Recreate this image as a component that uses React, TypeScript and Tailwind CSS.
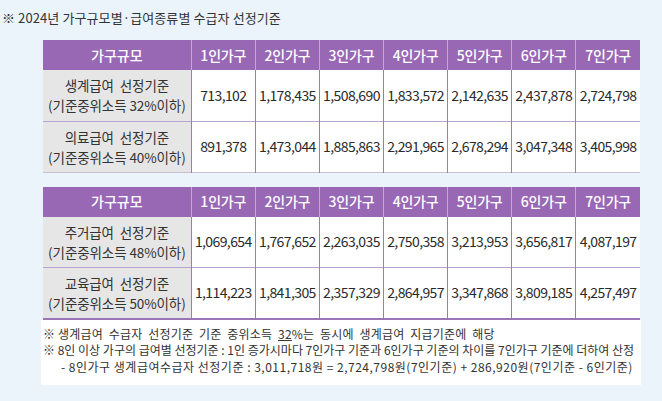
import React from "react";

const cols = ["1인가구", "2인가구", "3인가구", "4인가구", "5인가구", "6인가구", "7인가구"];

type Row = { a: string; b: string; v: string[] };

const t1: Row[] = [
  { a: "생계급여  선정기준", b: "(기준중위소득 32%이하)", v: ["713,102", "1,178,435", "1,508,690", "1,833,572", "2,142,635", "2,437,878", "2,724,798"] },
  { a: "의료급여  선정기준", b: "(기준중위소득 40%이하)", v: ["891,378", "1,473,044", "1,885,863", "2,291,965", "2,678,294", "3,047,348", "3,405,998"] },
];
const t2: Row[] = [
  { a: "주거급여  선정기준", b: "(기준중위소득 48%이하)", v: ["1,069,654", "1,767,652", "2,263,035", "2,750,358", "3,213,953", "3,656,817", "4,087,197"] },
  { a: "교육급여  선정기준", b: "(기준중위소득 50%이하)", v: ["1,114,223", "1,841,305", "2,357,329", "2,864,957", "3,347,868", "3,809,185", "4,257,497"] },
];

function Table({ rows, last }: { rows: Row[]; last?: boolean }) {
  return (
    <table className={`w-[597px] border-collapse table-fixed ${last ? "border-b-2 border-b-[#9a76b8]" : "border-b border-b-[#c9c1d3]"}`}>
      <colgroup>
        <col className="w-[148px]" />
        {cols.map((c) => (
          <col key={c} className="w-[64px]" />
        ))}
      </colgroup>
      <thead>
        <tr className="h-[30px] bg-[#9968b5] text-white text-[14px]">
          <th className="font-medium border-r border-r-[#c3a8d6]">가구규모</th>
          {cols.map((c, i) => (
            <th key={c} className={`font-medium tracking-[-0.2px] ${i < 6 ? "border-r border-r-[#c3a8d6]" : ""}`}>
              {c}
            </th>
          ))}
        </tr>
      </thead>
      <tbody>
        {rows.map((r, ri) => (
          <tr key={ri} className={`h-[51px] ${ri > 0 ? "border-t border-t-[#b9a3cf]" : ""}`}>
            <td className="bg-[#e6e6e6] text-center text-[13.5px] leading-[20px] text-[#333] border-r border-r-[#9b7bbb] whitespace-pre tracking-[-0.1px]">
              <div>{r.a}</div>
              <div>{r.b}</div>
            </td>
            {r.v.map((v, i) => (
              <td key={i} className={`bg-white text-center text-[14px] text-[#2a2a2a] tracking-[-0.6px] ${i < 6 ? "border-r border-r-[#9b7bbb]" : ""}`}>
                {v}
              </td>
            ))}
          </tr>
        ))}
      </tbody>
    </table>
  );
}

export default function App() {
  return (
    <div
      className="w-[662px] h-[401px] bg-[#ebf3fb] overflow-hidden text-[#333]"
      style={{ fontFamily: '"Noto Sans CJK KR", "Noto Sans", sans-serif' }}
    >
      <div className="pl-[2px] pt-[9px] h-[40px] text-[13px] leading-[18px] text-[#333] tracking-[0.1px]">
        ※ 2024년 가구규모별·급여종류별 수급자 선정기준
      </div>
      <div className="pl-[43px]">
        <Table rows={t1} />
      </div>
      <div className="pl-[43px] pt-[14px]">
        <Table rows={t2} last />
      </div>
      <div className="ml-[41px] w-[600px] bg-white pt-[6px] pb-[10px] text-[12px] leading-[16.5px] text-[#333] whitespace-pre">
        <div className="pl-[2px] tracking-[0.2px]">
          ※ 생계급여  수급자  선정기준  기준  중위소득  <span className="underline">32</span>%는  동시에  생계급여  지급기준에  해당
        </div>
        <div className="pl-[2px]">
          ※ 8인 이상 가구의 급여별 선정기준 : 1인 증가시마다 7인가구 기준과 6인가구 기준의 차이를 7인가구 기준에 더하여 산정
        </div>
        <div className="pl-[20px] tracking-[0.5px]">
          - 8인가구 생계급여수급자 선정기준 : 3,011,718원 = 2,724,798원(7인기준) + 286,920원(7인기준 - 6인기준)
        </div>
      </div>
    </div>
  );
}
